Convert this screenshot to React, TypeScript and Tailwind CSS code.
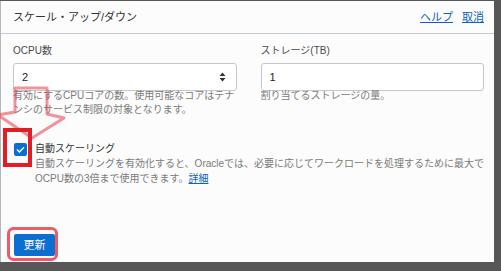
import React from 'react';

const FONT = { fontFamily: '"Liberation Sans", "Noto Sans CJK JP", sans-serif' };

const Spinner = () => (
  <svg width="7" height="10" viewBox="0 0 7 10" className="shrink-0">
    <path d="M3.5 0.5 L6.5 4 L0.5 4 Z" fill="#333" />
    <path d="M0.5 6 L6.5 6 L3.5 9.5 Z" fill="#333" />
  </svg>
);

const Field = ({ label, value, hint, spinner }: { label: string; value: string; hint: React.ReactNode; spinner?: boolean }) => (
  <div className="flex flex-col">
    <label className="text-[10px] leading-[14px] text-[#4a4a4a]">{label}</label>
    <div className="mt-[5px] h-[28px] flex items-center justify-between border border-[#c4c8ce] rounded-[3px] bg-white pl-[8px] pr-[10px]">
      <span className="text-[11px] text-[#222]">{value}</span>
      {spinner && <Spinner />}
    </div>
    <p className="-mt-[2px] whitespace-nowrap text-[10px] leading-[14px] text-[#7a7a7a]">{hint}</p>
  </div>
);

export default function App() {
  return (
    <div className="relative w-[501px] h-[271px] bg-[#575757] pt-[1px] overflow-hidden" style={FONT}>
      <div className="w-[494px] h-[261px] bg-[#fcfcfc] border-l border-[#b4b8bc] flex flex-col">
        {/* header */}
        <div className="h-[33px] shrink-0 flex items-center justify-between border-b border-[#c2cad3] pl-[12px] pr-[10px]">
          <h1 className="text-[11px] text-[#333]">スケール・アップ/ダウン</h1>
          <div className="flex gap-[9px] text-[11px] text-[#0b63c4] underline">
            <a href="#">ヘルプ</a>
            <a href="#">取消</a>
          </div>
        </div>

        {/* body */}
        <div className="px-[12px] pt-[10px] flex flex-col">
          <div className="grid grid-cols-2 gap-x-[24px] w-[471px]">
            <Field
              label="OCPU数"
              value="2"
              spinner
              hint={<>有効にするCPUコアの数。使用可能なコアはテナ<br />ンシのサービス制限の対象となります。</>}
            />
            <Field label="ストレージ(TB)" value="1" hint="割り当てるストレージの量。" />
          </div>

          <div className="mt-[24px] flex gap-[8px] pl-[1px]">
            <div className="mt-[2px] w-[13px] h-[13px] shrink-0 rounded-[2px] bg-[#0a6fd1] flex items-center justify-center">
              <svg width="9" height="7" viewBox="0 0 9 7">
                <path d="M1 3.6 L3.4 6 L8 1.2" stroke="#fff" strokeWidth="1.4" fill="none" />
              </svg>
            </div>
            <div className="flex flex-col whitespace-nowrap text-[10px] leading-[15px]">
              <span className="text-[#333]">自動スケーリング</span>
              <span className="text-[#7a7a7a]">
                自動スケーリングを有効化すると、Oracleでは、必要に応じてワークロードを処理するために最大で
                <br />
                OCPU数の3倍まで使用できます。<a href="#" className="text-[#0b63c4] underline">詳細</a>
              </span>
            </div>
          </div>

          <div className="mt-[46px] pl-[1px]">
            <button className="h-[22px] w-[41px] rounded-[2px] bg-[#0a6fd1] text-white text-[11px]">更新</button>
          </div>
        </div>
      </div>

      {/* annotations */}
      <svg className="absolute left-0 top-0 pointer-events-none" width="501" height="271">
        <path
          d="M15 88 L47 88 L47 114 L64 118 L32 138 L-2 115 L15 112 Z"
          fill="none"
          stroke="rgba(232,60,75,0.55)"
          strokeWidth="3"
          strokeLinejoin="round"
        />
        <rect x="5" y="130" width="25" height="35" fill="none" stroke="#e31d26" strokeWidth="4" />
        <rect x="8.5" y="228.5" width="48" height="31" rx="5" fill="none" stroke="rgba(232,50,70,0.8)" strokeWidth="3" />
      </svg>
    </div>
  );
}
